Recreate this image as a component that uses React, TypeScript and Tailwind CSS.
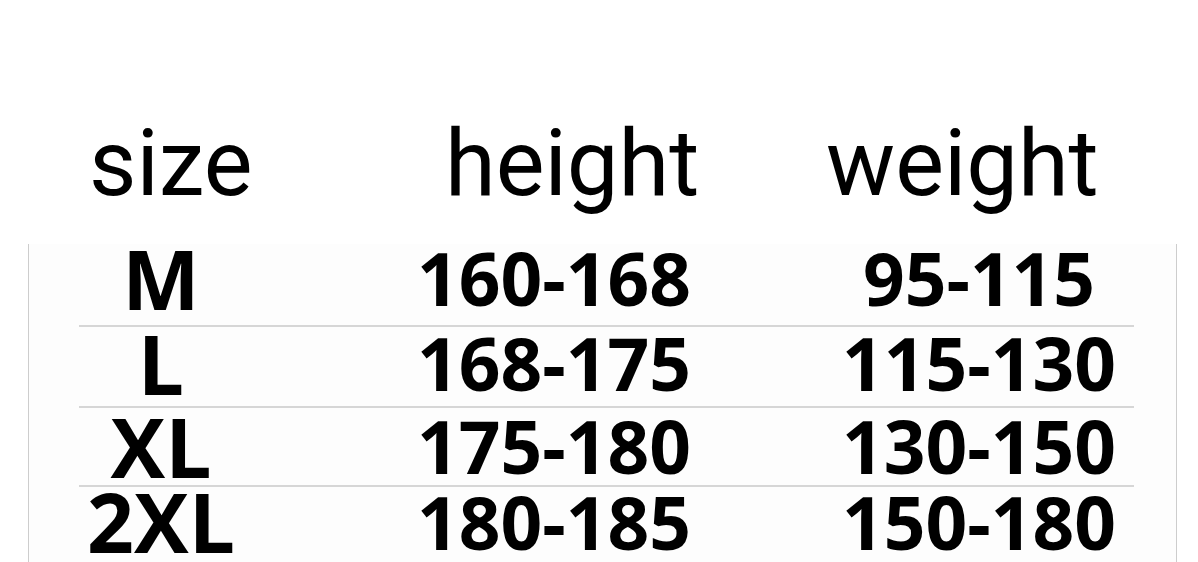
const ROWS = [
  { size: "M", height: "160-168", weight: "95-115", h: "h-[83px] pb-[12px]" },
  { size: "L", height: "168-175", weight: "115-130", h: "h-[81px] pb-[6px]" },
  { size: "XL", height: "175-180", weight: "130-150", h: "h-[79px]" },
  { size: "2XL", height: "180-185", weight: "150-180", h: "h-[74px] pb-[4px]" },
];

export default function App() {
  return (
    <div className="w-[1198px] h-[562px] overflow-hidden bg-white text-black">
      {/* Header */}
      <div
        className="h-[244px] pt-[118px] flex text-[92px] leading-none"
        style={{ fontFamily: "Roboto, 'Noto Sans', sans-serif" }}
      >
        <span className="ml-[89px] w-[356px]">size</span>
        <span className="w-[381px]">height</span>
        <span>weight</span>
      </div>

      {/* Size rows */}
      <div
        className="ml-[28px] w-[1149px] h-[318px] border-l border-r border-[#cdcdcd] bg-[#fdfdfd] font-bold leading-[0.75]"
        style={{ fontFamily: "'Open Sans', 'Noto Sans', sans-serif" }}
      >
        {ROWS.map((row, i) => (
          <div
            key={row.size}
            className={`ml-[50px] w-[1055px] flex items-center whitespace-nowrap ${row.h} ${
              i < ROWS.length - 1 ? "border-b-2 border-[#d6d6d6]" : ""
            }`}
          >
            <span className="w-[164px] flex justify-center text-[82px]">{row.size}</span>
            <span className="w-[622px] flex justify-center text-[73px]">{row.height}</span>
            <span className="w-[228px] flex justify-center text-[73px]">{row.weight}</span>
          </div>
        ))}
      </div>
    </div>
  );
}
